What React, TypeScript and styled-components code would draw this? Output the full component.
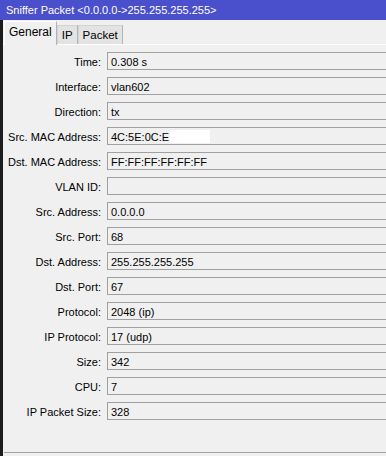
import styled, { createGlobalStyle } from "styled-components";

const GlobalStyle = createGlobalStyle`
  html, body {
    margin: 0;
    padding: 0;
    background: #f0f0f0;
  }
  body {
    font-family: "Liberation Sans", Arial, sans-serif;
    font-size: 11px;
    color: #000;
  }
`;

const Window = styled.div`
  width: 386px;
  height: 456px;
  display: flex;
  flex-direction: column;
  overflow: hidden;
  background: #f0f0f0;
`;

const TitleBar = styled.div`
  height: 20px;
  flex: 0 0 20px;
  background: #4a4fcb;
  color: #fff;
  display: flex;
  align-items: center;
  padding-left: 6px;
  font-size: 11px;
  white-space: nowrap;
`;

const Body = styled.div`
  flex: 1;
  display: flex;
  flex-direction: column;
  border-left: 3px solid #1c1c1c;
`;

const TabBar = styled.div`
  height: 24px;
  display: flex;
  align-items: flex-end;
  padding-left: 1px;
`;

const Tab = styled.div<{ $active?: boolean }>`
  height: ${(p) => (p.$active ? "24px" : "19px")};
  padding: 0 ${(p) => (p.$active ? "4px" : "4px")};
  padding-bottom: ${(p) => (p.$active ? "4px" : "0")};
  display: flex;
  align-items: center;
  justify-content: center;
  box-sizing: border-box;
  min-width: ${(p) => (p.$active ? "51px" : "20px")};
  background: ${(p) => (p.$active ? "#f0f0f0" : "#e3e3e3")};
  border-top: 1px solid ${(p) => (p.$active ? "#ffffff" : "#d2d2d2")};
  border-left: 1px solid ${(p) => (p.$active ? "#ffffff" : "#d2d2d2")};
  border-right: 1px solid #b4b4b4;
  font-size: ${(p) => (p.$active ? "12px" : "11.5px")};
  margin-bottom: ${(p) => (p.$active ? "-1px" : "0")};
  position: relative;
  z-index: ${(p) => (p.$active ? 1 : 0)};
`;

const Panel = styled.div`
  flex: 1;
  border-top: 1px solid #ffffff;
  padding-top: 7px;
  display: flex;
  flex-direction: column;
  gap: 7px;
`;

const Row = styled.div`
  display: grid;
  grid-template-columns: 98px 1fr;
  column-gap: 6px;
  height: 18px;
  align-items: center;
`;

const Label = styled.div`
  text-align: right;
  white-space: nowrap;
  padding-top: 1px;
`;

const Field = styled.div`
  height: 18px;
  box-sizing: border-box;
  border-top: 1px solid #a0a0a0;
  border-bottom: 1px solid #a0a0a0;
  border-left: 1px solid #a0a0a0;
  padding: 1px 0 0 3px;
  display: flex;
  align-items: center;
  white-space: nowrap;
`;

const Redacted = styled.span`
  display: inline-block;
  width: 40px;
  height: 13px;
  background: #ffffff;
  margin-left: 1px;
`;

const Footer = styled.div`
  height: 3px;
  border-top: 1px solid #a0a0a0;
  margin-left: 1px;
`;

const rows: [string, string][] = [
  ["Time:", "0.308 s"],
  ["Interface:", "vlan602"],
  ["Direction:", "tx"],
  ["Src. MAC Address:", "4C:5E:0C:E"],
  ["Dst. MAC Address:", "FF:FF:FF:FF:FF:FF"],
  ["VLAN ID:", ""],
  ["Src. Address:", "0.0.0.0"],
  ["Src. Port:", "68"],
  ["Dst. Address:", "255.255.255.255"],
  ["Dst. Port:", "67"],
  ["Protocol:", "2048 (ip)"],
  ["IP Protocol:", "17 (udp)"],
  ["Size:", "342"],
  ["CPU:", "7"],
  ["IP Packet Size:", "328"],
];

export default function App() {
  return (
    <>
      <GlobalStyle />
      <Window>
        <TitleBar>Sniffer Packet &lt;0.0.0.0-&gt;255.255.255.255&gt;</TitleBar>
        <Body>
          <TabBar>
            <Tab $active>General</Tab>
            <Tab>IP</Tab>
            <Tab>Packet</Tab>
          </TabBar>
          <Panel>
            {rows.map(([label, value]) => (
              <Row key={label}>
                <Label>{label}</Label>
                <Field>
                  {value}
                  {label === "Src. MAC Address:" && <Redacted />}
                </Field>
              </Row>
            ))}
          </Panel>
          <Footer />
        </Body>
      </Window>
    </>
  );
}
